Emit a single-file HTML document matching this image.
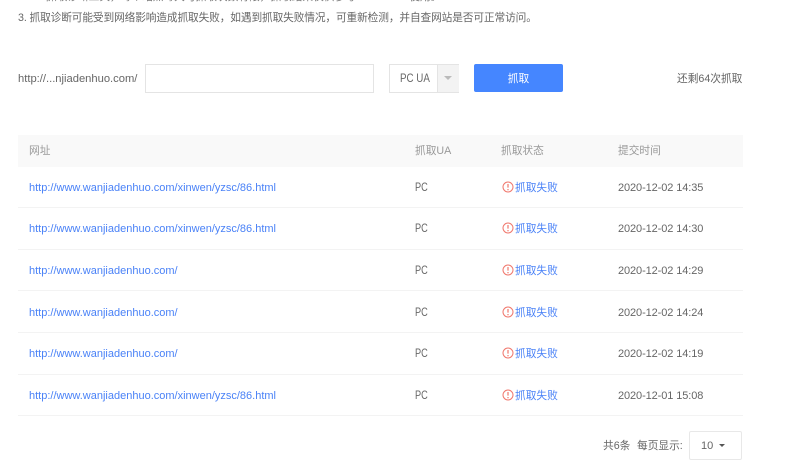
<!DOCTYPE html>
<html><head><meta charset="utf-8">
<style>
html,body{margin:0;padding:0;background:#fff}
body{width:799px;height:475px;position:relative;overflow:hidden;font:10.7px/20px "Liberation Sans","Noto Sans CJK SC",sans-serif;color:#666}
.a{position:absolute;white-space:nowrap}
.l{position:absolute;left:18px;width:725px;height:1px;background:#f3f3f3}
.u{color:#4a82f7;left:29px;font-size:11px}
.s{color:#4a82f7;left:515px}
.t{left:618px;font-size:11px;letter-spacing:-.1px}
.p{left:415px;font-size:11.5px;transform:scaleX(.8);transform-origin:0 0}
svg{position:absolute;left:502px}
</style></head><body>
<div class="a" style="left:34px;top:-13px;color:#777">1. 抓取诊断工具，每个站点每天可抓取次数有限，抓取结果仅供参考　　　　　使用。</div>
<div class="a" style="left:18px;top:8px;letter-spacing:-.12px">3. 抓取诊断可能受到网络影响造成抓取失败，如遇到抓取失败情况，可重新检测，并自查网站是否可正常访问。</div>

<div class="a" style="left:18px;top:69px;font-size:11.2px">http://...njiadenhuo.com/</div>
<div class="a" style="left:145px;top:64px;width:227px;height:27px;border:1px solid #e4e4e4;background:#fff"></div>
<div class="a" style="left:389px;top:64px;width:68px;height:27px;border:1px solid #e4e4e4"></div>
<div class="a" style="left:400px;top:69px;font-size:11.5px;transform:scaleX(.85);transform-origin:0 0">PC UA</div>
<div class="a" style="left:437px;top:65px;width:21px;height:27px;background:#f3f3f3;border-left:1px solid #e4e4e4"></div>
<div class="a" style="left:444px;top:76px;width:0;height:0;border:4px solid transparent;border-top:4px solid #bbb;border-bottom:0"></div>
<div class="a" style="left:474px;top:64px;width:89px;height:28px;background:#4586ff;border-radius:2px;color:#fff;text-align:center;line-height:30px">抓取</div>
<div class="a" style="left:677px;top:69px">还剩64次抓取</div>

<div class="a" style="left:18px;top:135px;width:725px;height:32px;background:#f9f9f9"></div>
<div class="a" style="left:29px;top:141px;color:#999">网址</div>
<div class="a" style="left:415px;top:141px;color:#999">抓取UA</div>
<div class="a" style="left:501px;top:141px;color:#999">抓取状态</div>
<div class="a" style="left:618px;top:141px;color:#999">提交时间</div>

<div class="l" style="top:207px"></div><div class="l" style="top:249px"></div><div class="l" style="top:290px"></div><div class="l" style="top:332px"></div><div class="l" style="top:374px"></div><div class="l" style="top:415px"></div>

<div class="a u" style="top:178px">http://www.wanjiadenhuo.com/xinwen/yzsc/86.html</div>
<div class="a p" style="top:178px">PC</div>
<svg width="12" height="12" style="top:181px" viewBox="0 0 12 12"><circle cx="6" cy="6" r="5" fill="none" stroke="#f0776c" stroke-width="1"/><path d="M6 3v3.6M6 8v1.2" stroke="#f0776c" stroke-width="1.2"/></svg>
<div class="a s" style="top:178px">抓取失败</div>
<div class="a t" style="top:178px">2020-12-02 14:35</div>

<div class="a u" style="top:219px">http://www.wanjiadenhuo.com/xinwen/yzsc/86.html</div>
<div class="a p" style="top:219px">PC</div>
<svg width="12" height="12" style="top:222px" viewBox="0 0 12 12"><circle cx="6" cy="6" r="5" fill="none" stroke="#f0776c" stroke-width="1"/><path d="M6 3v3.6M6 8v1.2" stroke="#f0776c" stroke-width="1.2"/></svg>
<div class="a s" style="top:219px">抓取失败</div>
<div class="a t" style="top:219px">2020-12-02 14:30</div>

<div class="a u" style="top:261px">http://www.wanjiadenhuo.com/</div>
<div class="a p" style="top:261px">PC</div>
<svg width="12" height="12" style="top:264px" viewBox="0 0 12 12"><circle cx="6" cy="6" r="5" fill="none" stroke="#f0776c" stroke-width="1"/><path d="M6 3v3.6M6 8v1.2" stroke="#f0776c" stroke-width="1.2"/></svg>
<div class="a s" style="top:261px">抓取失败</div>
<div class="a t" style="top:261px">2020-12-02 14:29</div>

<div class="a u" style="top:303px">http://www.wanjiadenhuo.com/</div>
<div class="a p" style="top:303px">PC</div>
<svg width="12" height="12" style="top:306px" viewBox="0 0 12 12"><circle cx="6" cy="6" r="5" fill="none" stroke="#f0776c" stroke-width="1"/><path d="M6 3v3.6M6 8v1.2" stroke="#f0776c" stroke-width="1.2"/></svg>
<div class="a s" style="top:303px">抓取失败</div>
<div class="a t" style="top:303px">2020-12-02 14:24</div>

<div class="a u" style="top:344px">http://www.wanjiadenhuo.com/</div>
<div class="a p" style="top:344px">PC</div>
<svg width="12" height="12" style="top:347px" viewBox="0 0 12 12"><circle cx="6" cy="6" r="5" fill="none" stroke="#f0776c" stroke-width="1"/><path d="M6 3v3.6M6 8v1.2" stroke="#f0776c" stroke-width="1.2"/></svg>
<div class="a s" style="top:344px">抓取失败</div>
<div class="a t" style="top:344px">2020-12-02 14:19</div>

<div class="a u" style="top:386px">http://www.wanjiadenhuo.com/xinwen/yzsc/86.html</div>
<div class="a p" style="top:386px">PC</div>
<svg width="12" height="12" style="top:389px" viewBox="0 0 12 12"><circle cx="6" cy="6" r="5" fill="none" stroke="#f0776c" stroke-width="1"/><path d="M6 3v3.6M6 8v1.2" stroke="#f0776c" stroke-width="1.2"/></svg>
<div class="a s" style="top:386px">抓取失败</div>
<div class="a t" style="top:386px">2020-12-01 15:08</div>

<div class="a" style="left:603px;top:436px">共6条</div>
<div class="a" style="left:637px;top:436px">每页显示:</div>
<div class="a" style="left:689px;top:431px;width:51px;height:27px;border:1px solid #e8e8e8;border-radius:2px"></div>
<div class="a" style="left:701px;top:436px;font-size:11px">10</div>
<div class="a" style="left:719px;top:444px;width:0;height:0;border:3px solid transparent;border-top:3px solid #555;border-bottom:0"></div>
</body></html>
